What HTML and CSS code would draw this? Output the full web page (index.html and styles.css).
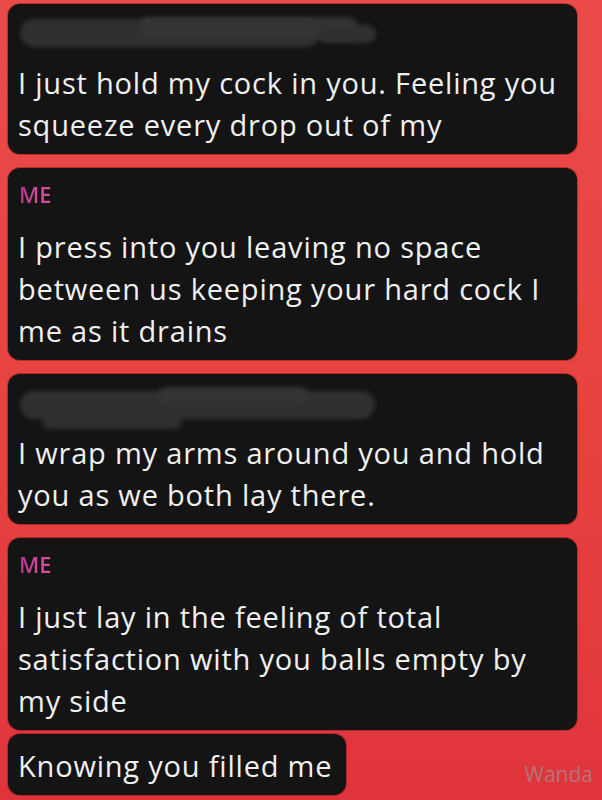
FILE: index.html
```html
<!DOCTYPE html>
<html lang="en">
<head>
    <meta charset="UTF-8">
    <meta name="viewport" content="width=device-width, initial-scale=1.0">
    <title>Chat</title>
    <link rel="stylesheet" href="styles.css">
</head>
<body>
    <div class="chat">
        <div class="bubble">
            <div class="name redacted">
                <span class="smudge s1"></span>
                <span class="smudge s2"></span>
                <span class="smudge s3"></span>
            </div>
            <p class="text">I just hold my cock in you. Feeling you<br>squeeze every drop out of my</p>
        </div>

        <div class="bubble">
            <div class="name me">ME</div>
            <p class="text">I press into you leaving no space<br>between us keeping your hard cock I<br>me as it drains</p>
        </div>

        <div class="bubble">
            <div class="name redacted">
                <span class="smudge s4"></span>
                <span class="smudge s5"></span>
                <span class="smudge s6"></span>
            </div>
            <p class="text">I wrap my arms around you and hold<br>you as we both lay there.</p>
        </div>

        <div class="bubble">
            <div class="name me">ME</div>
            <p class="text">I just lay in the feeling of total<br>satisfaction with you balls empty by<br>my side</p>
        </div>

        <div class="bubble short">
            <p class="text">Knowing you filled me</p>
        </div>
    </div>

    <div class="watermark">Wanda</div>
</body>
</html>
```

FILE: styles.css
```css
html, body {
    height: 100%;
}
body {
    margin: 0;
    font-family: "Open Sans", Lato, sans-serif;
    background: linear-gradient(180deg, #ea4b49 0%, #e6413f 60%, #e0343d 100%);
    overflow: hidden;
    position: relative;
}
.chat {
    padding: 4px 25px 0 8px;
    display: flex;
    flex-direction: column;
    align-items: flex-start;
}
.bubble {
    background: #141414;
    border-radius: 12px;
    padding: 11px 10px 8px 10px;
    margin-bottom: 14px;
    align-self: stretch;
    box-shadow: 0 0 0 1px rgba(110, 20, 20, 0.45);
}
.bubble.short {
    align-self: flex-start;
    margin-top: -10px;
    padding-right: 14px;
    margin-bottom: 0;
}
.name {
    height: 30px;
    line-height: 30px;
    margin-bottom: 17px;
    font-size: 22px;
    font-weight: 600;
}
.me {
    padding-left: 1px;
    background: linear-gradient(100deg, #a92f86 0%, #d84c9c 60%, #c9479a 100%);
    -webkit-background-clip: text;
    background-clip: text;
    color: transparent;
    width: max-content;
}
/* blurred-out contact name */
.redacted {
    position: relative;
}
.smudge {
    position: absolute;
    background: #303030;
    border-radius: 14px;
    filter: blur(2px);
}
.s1 { left: 2px; top: 4px; width: 300px; height: 28px; }
.s2 { left: 120px; top: 2px; width: 220px; height: 22px; background: #343434; }
.s3 { left: 300px; top: 10px; width: 58px; height: 18px; }
.s4 { left: 2px; top: 6px; width: 355px; height: 28px; }
.s5 { left: 140px; top: 2px; width: 150px; height: 18px; background: #343434; }
.s6 { left: 24px; top: 28px; width: 140px; height: 16px; }
.text {
    margin: 0;
    color: #f0f0f0;
    font-size: 29px;
    letter-spacing: 0.8px;
    line-height: 42px;
    white-space: nowrap;
}
.watermark {
    position: absolute;
    right: 9px;
    bottom: 12px;
    font-family: "Open Sans", sans-serif;
    font-size: 21px;
    color: rgba(170, 130, 130, 0.85);
}
```
